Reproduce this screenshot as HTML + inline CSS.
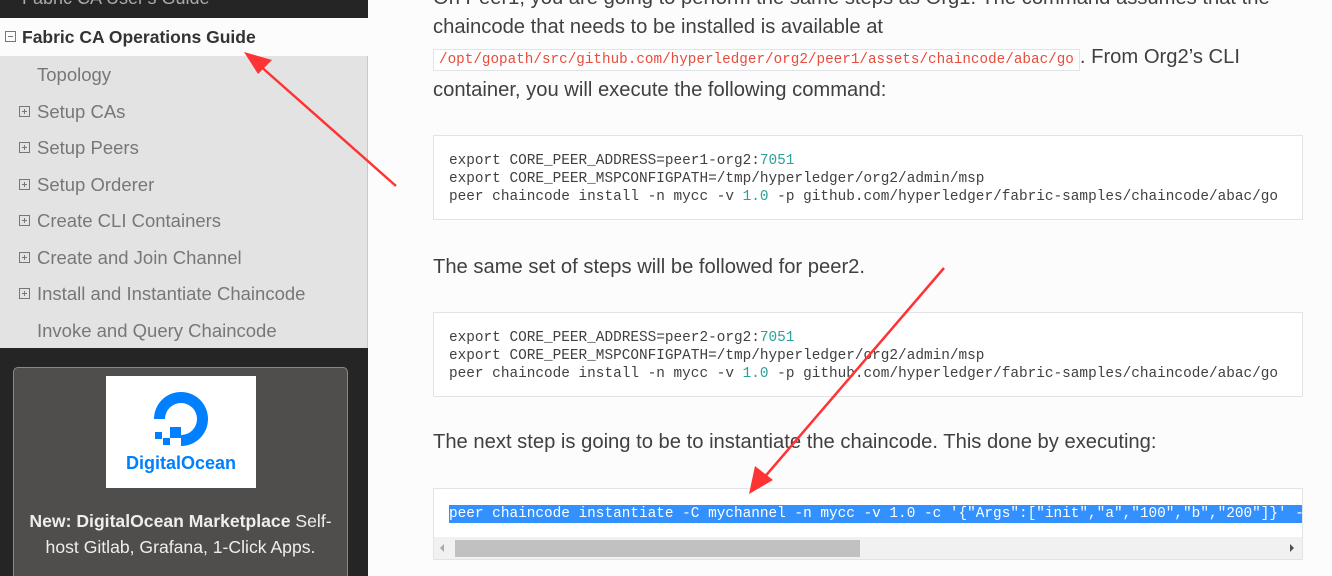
<!DOCTYPE html>
<html style="overflow:hidden;width:1332px;height:576px"><head><meta charset="utf-8"><style>
*{margin:0;padding:0;box-sizing:border-box}
body{width:1332px;height:576px;overflow:hidden;background:#fcfcfc;font-family:"Liberation Sans",sans-serif;position:relative}
.side{position:absolute;left:0;top:0;width:368px;height:576px;background:#252525;overflow:hidden}
.top{position:absolute;left:22px;top:-12px;color:#aaa;font-size:18px}
.cur{position:absolute;left:0;top:18px;width:368px;height:38px;background:#fcfcfc;font-weight:bold;color:#333;font-size:17.5px;padding:9px 0 0 22px}
.sq{position:absolute;width:11px;height:11px;border:1px solid #777;font-size:0}
.sq:before{content:"";position:absolute;left:2px;top:4px;width:5px;height:1px;background:#777}
.sq.p:after{content:"";position:absolute;left:4px;top:2px;width:1px;height:5px;background:#777}
.gray{position:absolute;left:0;top:56px;width:368px;height:292px;background:#e3e3e3;border-right:1px solid #c9c9c9}
.it{position:absolute;left:37px;color:#777;font-size:18.5px}
.card{position:absolute;left:13px;top:367px;width:335px;height:230px;background:#4f4e4c;border:1px solid #888;border-radius:5px}
.logo{position:absolute;left:92px;top:8px;width:150px;height:112px;background:#fff}
.ct{position:absolute;left:0;top:140px;width:333px;text-align:center;color:#eee;font-size:17.6px;line-height:26px}
.p{position:absolute;left:433px;font-size:20.2px;color:#404040;white-space:nowrap}
.code{position:absolute;left:433px;width:870px;background:#fff;border:1px solid #e1e4e5;font-family:"Liberation Mono",monospace;font-size:14.4px;line-height:18px;color:#404040;padding:16px 15px;white-space:pre;overflow:hidden}
.ic{font-family:"Liberation Mono",monospace;font-size:14.3px;color:#e74c3c;background:#fff;border:1px solid #e1e4e5;padding:2px 5px}
</style></head><body>
<div class="side">
<div class="top">Fabric CA User's Guide</div>
<div class="cur"><span class="sq" style="left:5px;top:13px"></span>Fabric CA Operations Guide</div>
<div class="gray">
<div class="it" style="top:8px">Topology</div>
<div class="sq p" style="left:19px;top:50px"></div><div class="it" style="top:45px">Setup CAs</div>
<div class="sq p" style="left:19px;top:86px"></div><div class="it" style="top:81px">Setup Peers</div>
<div class="sq p" style="left:19px;top:123px"></div><div class="it" style="top:118px">Setup Orderer</div>
<div class="sq p" style="left:19px;top:159px"></div><div class="it" style="top:154px">Create CLI Containers</div>
<div class="sq p" style="left:19px;top:196px"></div><div class="it" style="top:191px">Create and Join Channel</div>
<div class="sq p" style="left:19px;top:232px"></div><div class="it" style="top:227px">Install and Instantiate Chaincode</div>
<div class="it" style="top:264px">Invoke and Query Chaincode</div>
</div>
<div class="card">
<div class="logo">
<svg width="150" height="112" viewBox="0 0 150 112"><path d="M75 70 L75 59 A16 16 0 1 0 59 43 L48 43 A27 27 0 1 1 75 70Z" fill="#0080ff"/><rect x="64" y="51" width="11" height="11" fill="#0080ff"/><rect x="57" y="62" width="7" height="7" fill="#0080ff"/><rect x="49" y="56" width="7" height="7" fill="#0080ff"/>
<text x="75" y="93" text-anchor="middle" font-family="Liberation Sans" font-weight="bold" font-size="18" fill="#0080ff">DigitalOcean</text></svg>
</div>
<div class="ct"><b>New: DigitalOcean Marketplace</b> Self-<br>host Gitlab, Grafana, 1-Click Apps.</div>
</div>
</div>
<div class="p" style="top:-13px">On Peer1, you are going to perform the same steps as Org1. The command assumes that the</div>
<div class="p" style="top:16px">chaincode that needs to be installed is available at</div>
<div class="p" style="top:46px"><span class="ic">/opt/gopath/src/github.com/hyperledger/org2/peer1/assets/chaincode/abac/go</span>. From Org2’s CLI</div>
<div class="p" style="top:79px">container, you will execute the following command:</div>
<div class="code" style="top:135px;height:85px">export CORE_PEER_ADDRESS=peer1-org2:<span style="color:#2aa198">7051</span>
export CORE_PEER_MSPCONFIGPATH=/tmp/hyperledger/org2/admin/msp
peer chaincode install -n mycc -v <span style="color:#2aa198">1.0</span> -p github.com/hyperledger/fabric-samples/chaincode/abac/go</div>
<div class="p" style="top:256px">The same set of steps will be followed for peer2.</div>
<div class="code" style="top:312px;height:85px">export CORE_PEER_ADDRESS=peer2-org2:<span style="color:#2aa198">7051</span>
export CORE_PEER_MSPCONFIGPATH=/tmp/hyperledger/org2/admin/msp
peer chaincode install -n mycc -v <span style="color:#2aa198">1.0</span> -p github.com/hyperledger/fabric-samples/chaincode/abac/go</div>
<div class="p" style="top:431px">The next step is going to be to instantiate the chaincode. This done by executing:</div>
<div class="code" style="top:488px;height:72px;padding-top:16px"><span style="background:#3390ff;color:#fff;display:inline-block;width:860px">peer chaincode instantiate -C mychannel -n mycc -v 1.0 -c '{"Args":["init","a","100","b","200"]}' -o</span></div>
<div style="position:absolute;left:434px;top:537px;width:868px;height:22px;background:#f1f1f1"></div>
<div style="position:absolute;left:455px;top:540px;width:405px;height:17px;background:#c1c1c1"></div>
<div style="position:absolute;left:440px;top:544px;width:0;height:0;border:4px solid transparent;border-right-color:#aaa;border-left:0"></div>
<div style="position:absolute;left:1290px;top:544px;width:0;height:0;border:4px solid transparent;border-left-color:#505050;border-right:0"></div>
<svg style="position:absolute;left:0;top:0" width="1332" height="576">
<line x1="396" y1="186" x2="258" y2="64" stroke="#f33" stroke-width="2.5"/>
<polygon points="244,52 272,60 258,74" fill="#f33"/>
<line x1="944" y1="268" x2="762" y2="480" stroke="#f33" stroke-width="2.5"/>
<polygon points="749,494 755,466 773,480" fill="#f33"/>
</svg>
</body></html>
